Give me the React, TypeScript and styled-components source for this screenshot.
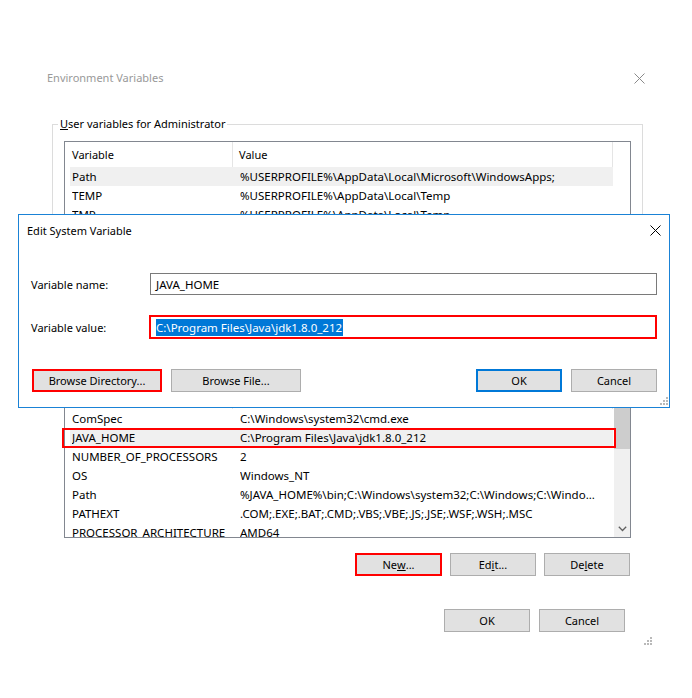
import styled, { createGlobalStyle } from "styled-components";

const GlobalStyle = createGlobalStyle`
  html, body {
    margin: 0;
    padding: 0;
    background: #fff;
  }
  body {
    font-family: "Noto Sans", "Segoe UI", sans-serif;
    font-size: 11px;
    color: #000;
  }
  * {
    box-sizing: border-box;
  }
`;

const Window = styled.div`
  position: relative;
  width: 692px;
  height: 698px;
  overflow: hidden;
  background: #fff;
  display: flex;
  flex-direction: column;
`;

const TitleBar = styled.div`
  display: flex;
  align-items: center;
  justify-content: space-between;
  height: 16px;
  margin-top: 70px;
  padding: 0 47px;
`;

const TitleText = styled.span`
  color: #999;
  line-height: 16px;
`;

const Group = styled.fieldset`
  margin: 30px 0 0 52px;
  padding: 0 0 9px 0;
  width: 591px;
  min-width: 0;
  border: 1px solid #dcdcdc;
`;

const Legend = styled.legend`
  margin-left: 5px;
  padding: 0 2px;
  line-height: 16px;
`;

const Section = styled.div`
  margin: 0 0 0 53px;
  display: flex;
  flex-direction: column;
`;

const SectionLabel = styled.div`
  margin: 0 0 0 7px;
  line-height: 16px;
`;

const ListBox = styled.div<{ $height: number; $top: number }>`
  position: relative;
  margin: ${(p) => p.$top}px 0 0 11px;
  width: 567px;
  height: ${(p) => p.$height}px;
  border: 1px solid #828790;
  background: #fff;
  display: flex;
`;

const ListMain = styled.div`
  width: 548px;
  padding-left: 5px;
  display: flex;
  flex-direction: column;
  overflow-x: visible;
  overflow-y: clip;
`;

const Header = styled.div`
  display: flex;
  height: 25px;
  flex-shrink: 0;
`;

const HeaderCell = styled.div<{ $width?: number; $pad: number }>`
  ${(p) => (p.$width ? `width: ${p.$width}px;` : "flex: 1;")}
  padding-left: ${(p) => p.$pad}px;
  border-right: 1px solid #e5e5e5;
  display: flex;
  align-items: center;
`;

const Row = styled.div<{ $shaded?: boolean; $flagged?: boolean }>`
  position: relative;
  display: grid;
  grid-template-columns: 168px 1fr;
  height: 19px;
  flex-shrink: 0;
  padding-left: 2px;
  align-items: center;
  white-space: nowrap;
  font-size: 11.5px;
  background: ${(p) => (p.$shaded ? "#f0f0f0" : "transparent")};

  & > span {
    overflow: hidden;
  }

  ${(p) =>
    p.$flagged &&
    `
    &::after {
      content: "";
      position: absolute;
      left: -8px;
      right: -3px;
      top: 0;
      bottom: -1px;
      border: 2px solid #f00;
    }
  `}
`;

const Gutter = styled.div`
  width: 16px;
  margin-left: 1px;
`;

const ScrollTrack = styled.div`
  width: 16px;
  margin-left: 1px;
  background: #f0f0f0;
  display: flex;
  flex-direction: column;
`;

const ScrollArrow = styled.div`
  height: 17px;
  display: flex;
  align-items: center;
  justify-content: center;
  flex-shrink: 0;
`;

const ScrollThumb = styled.div<{ $size: number }>`
  height: ${(p) => p.$size}px;
  background: #cdcdcd;
  flex-shrink: 0;
`;

const ScrollSpacer = styled.div`
  flex: 1;
`;

const ButtonRow = styled.div<{ $top: number; $right: number; $gap: number }>`
  display: flex;
  justify-content: flex-end;
  gap: ${(p) => p.$gap}px;
  margin-top: ${(p) => p.$top}px;
  padding-right: ${(p) => p.$right}px;
`;

const Button = styled.button<{ $width: number; $variant?: "default" | "flagged" }>`
  width: ${(p) => p.$width}px;
  height: 23px;
  padding: 0;
  font-family: inherit;
  font-size: 11px;
  color: #000;
  background: #e1e1e1;
  border: ${(p) =>
    p.$variant === "default"
      ? "2px solid #0078d7"
      : p.$variant === "flagged"
      ? "2px solid #f00"
      : "1px solid #adadad"};
  display: flex;
  align-items: center;
  justify-content: center;
`;

const GripRow = styled.div<{ $top: number; $right: number }>`
  display: flex;
  justify-content: flex-end;
  margin-top: ${(p) => p.$top}px;
  padding-right: ${(p) => p.$right}px;
`;

/* dialog on top */

const Dialog = styled.div`
  position: absolute;
  left: 18px;
  top: 214px;
  width: 652px;
  height: 194px;
  background: #fff;
  border: 1px solid #1a82d6;
  display: flex;
  flex-direction: column;
`;

const DialogTitle = styled.div`
  display: flex;
  align-items: center;
  justify-content: space-between;
  height: 30px;
  padding: 0 8px;
`;

const FieldRow = styled.div<{ $top: number }>`
  display: flex;
  align-items: center;
  height: 24px;
  margin-top: ${(p) => p.$top}px;
  padding: 0 12px;
`;

const FieldLabel = styled.label`
  width: 119px;
  flex-shrink: 0;
`;

const TextBox = styled.div<{ $flagged?: boolean }>`
  flex: 1;
  display: flex;
  align-items: center;
  white-space: nowrap;
  font-size: 11.5px;
  height: ${(p) => (p.$flagged ? 24 : 22)}px;
  margin-left: ${(p) => (p.$flagged ? -1 : 0)}px;
  padding-left: 5px;
  border: ${(p) => (p.$flagged ? "2px solid #f00" : "1px solid #7a7a7a")};
`;

const Selection = styled.span`
  background: #0078d7;
  color: #fff;
  line-height: 17px;
  padding: 0 1px 0 0;
`;

const DialogButtons = styled.div`
  display: flex;
  justify-content: space-between;
  margin-top: 30px;
  padding: 0 12px 0 13px;
`;

const ButtonGroup = styled.div`
  display: flex;
  gap: 9px;
`;

const CloseIcon = ({ color }: { color: string }) => (
  <svg width="11" height="11" viewBox="0 0 11 11">
    <path d="M0.5 0.5 L10.5 10.5 M10.5 0.5 L0.5 10.5" stroke={color} strokeWidth="1" fill="none" />
  </svg>
);

const Grip = () => (
  <svg width="8" height="8" viewBox="0 0 8 8">
    {[
      [6, 0],
      [3, 3],
      [6, 3],
      [0, 6],
      [3, 6],
      [6, 6],
    ].map(([x, y]) => (
      <rect key={`${x}-${y}`} x={x} y={y} width="2" height="2" fill="#b9b9b9" />
    ))}
  </svg>
);

const Chevron = () => (
  <svg width="9" height="6" viewBox="0 0 9 6">
    <polyline points="0.8,0.8 4.5,4.5 8.2,0.8" stroke="#606060" strokeWidth="1.3" fill="none" />
  </svg>
);

type Variable = { name: string; value: string; shaded?: boolean; flagged?: boolean };

const userVars: Variable[] = [
  { name: "Path", value: "%USERPROFILE%\\AppData\\Local\\Microsoft\\WindowsApps;", shaded: true },
  { name: "TEMP", value: "%USERPROFILE%\\AppData\\Local\\Temp" },
  { name: "TMP", value: "%USERPROFILE%\\AppData\\Local\\Temp" },
];

const systemVars: Variable[] = [
  { name: "ComSpec", value: "C:\\Windows\\system32\\cmd.exe" },
  { name: "JAVA_HOME", value: "C:\\Program Files\\Java\\jdk1.8.0_212", shaded: true, flagged: true },
  { name: "NUMBER_OF_PROCESSORS", value: "2" },
  { name: "OS", value: "Windows_NT" },
  { name: "Path", value: "%JAVA_HOME%\\bin;C:\\Windows\\system32;C:\\Windows;C:\\Windo..." },
  { name: "PATHEXT", value: ".COM;.EXE;.BAT;.CMD;.VBS;.VBE;.JS;.JSE;.WSF;.WSH;.MSC" },
  { name: "PROCESSOR_ARCHITECTURE", value: "AMD64" },
  { name: "PROCESSOR_IDENTIFIER", value: "Intel64 Family 6 Model 158 Stepping 10, GenuineIntel" },
];

const VarList = ({ rows }: { rows: Variable[] }) => (
  <ListMain>
    <Header>
      <HeaderCell $width={163} $pad={2}>
        Variable
      </HeaderCell>
      <HeaderCell $pad={6}>Value</HeaderCell>
    </Header>
    {rows.map((r) => (
      <Row key={r.name + r.value} $shaded={r.shaded} $flagged={r.flagged}>
        <span>{r.name}</span>
        <span>{r.value}</span>
      </Row>
    ))}
  </ListMain>
);

export default function App() {
  return (
    <>
      <GlobalStyle />
      <Window>
        <TitleBar>
          <TitleText>Environment Variables</TitleText>
          <CloseIcon color="#8a8a8a" />
        </TitleBar>

        <Group>
          <Legend>
            <u>U</u>ser variables for Administrator
          </Legend>
          <ListBox $top={9} $height={160}>
            <VarList rows={userVars} />
            <Gutter />
          </ListBox>
          <ButtonRow $top={9} $right={11} $gap={9}>
            <Button $width={86}>New...</Button>
            <Button $width={86}>Edit...</Button>
            <Button $width={86}>Delete</Button>
          </ButtonRow>
        </Group>

        <Section>
          <SectionLabel>
            <u>S</u>ystem variables
          </SectionLabel>
          <ListBox $top={24} $height={155}>
            <VarList rows={systemVars} />
            <ScrollTrack>
              <ScrollArrow />
              <ScrollThumb $size={48} />
              <ScrollSpacer />
              <ScrollArrow>
                <Chevron />
              </ScrollArrow>
            </ScrollTrack>
          </ListBox>
        </Section>

        <ButtonRow $top={15} $right={62} $gap={8}>
          <Button $width={87} $variant="flagged">
            Ne<u>w</u>...
          </Button>
          <Button $width={86}>
            Ed<u>i</u>t...
          </Button>
          <Button $width={86}>
            De<u>l</u>ete
          </Button>
        </ButtonRow>

        <ButtonRow $top={33} $right={67} $gap={9}>
          <Button $width={86}>OK</Button>
          <Button $width={86}>Cancel</Button>
        </ButtonRow>

        <GripRow $top={5} $right={40}>
          <Grip />
        </GripRow>

        <Dialog>
          <DialogTitle>
            <span>Edit System Variable</span>
            <CloseIcon color="#000" />
          </DialogTitle>
          <FieldRow $top={27}>
            <FieldLabel>Variable name:</FieldLabel>
            <TextBox>JAVA_HOME</TextBox>
          </FieldRow>
          <FieldRow $top={19}>
            <FieldLabel>Variable value:</FieldLabel>
            <TextBox $flagged>
              <Selection>C:\Program Files\Java\jdk1.8.0_212</Selection>
            </TextBox>
          </FieldRow>
          <DialogButtons>
            <ButtonGroup>
              <Button $width={130} $variant="flagged">
                Browse Directory...
              </Button>
              <Button $width={130}>Browse File...</Button>
            </ButtonGroup>
            <ButtonGroup>
              <Button $width={86} $variant="default">
                OK
              </Button>
              <Button $width={86}>Cancel</Button>
            </ButtonGroup>
          </DialogButtons>
          <GripRow $top={5} $right={1}>
            <Grip />
          </GripRow>
        </Dialog>
      </Window>
    </>
  );
}
